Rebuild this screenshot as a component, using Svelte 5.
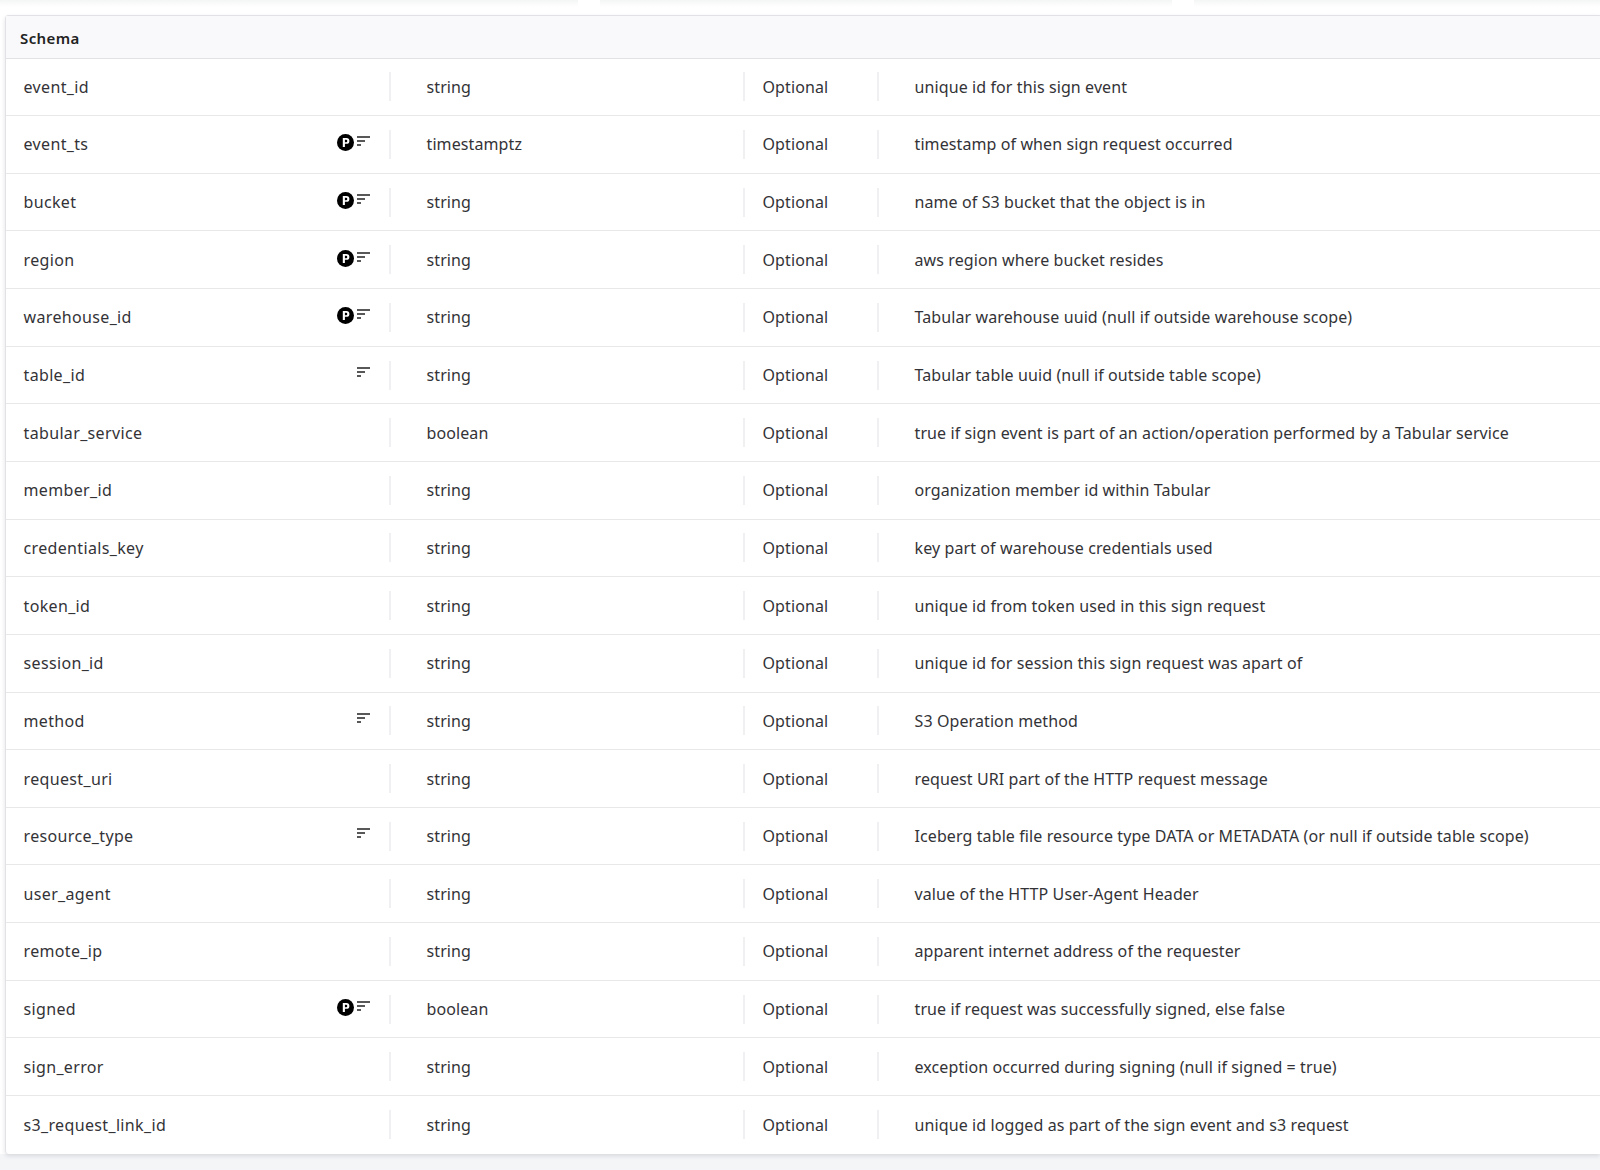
<script>
  const rows = [
    ['event_id', '', 'string', 'unique id for this sign event'],
    ['event_ts', 'ps', 'timestamptz', 'timestamp of when sign request occurred'],
    ['bucket', 'ps', 'string', 'name of S3 bucket that the object is in'],
    ['region', 'ps', 'string', 'aws region where bucket resides'],
    ['warehouse_id', 'ps', 'string', 'Tabular warehouse uuid (null if outside warehouse scope)'],
    ['table_id', 's', 'string', 'Tabular table uuid (null if outside table scope)'],
    ['tabular_service', '', 'boolean', 'true if sign event is part of an action/operation performed by a Tabular service'],
    ['member_id', '', 'string', 'organization member id within Tabular'],
    ['credentials_key', '', 'string', 'key part of warehouse credentials used'],
    ['token_id', '', 'string', 'unique id from token used in this sign request'],
    ['session_id', '', 'string', 'unique id for session this sign request was apart of'],
    ['method', 's', 'string', 'S3 Operation method'],
    ['request_uri', '', 'string', 'request URI part of the HTTP request message'],
    ['resource_type', 's', 'string', 'Iceberg table file resource type DATA or METADATA (or null if outside table scope)'],
    ['user_agent', '', 'string', 'value of the HTTP User-Agent Header'],
    ['remote_ip', '', 'string', 'apparent internet address of the requester'],
    ['signed', 'ps', 'boolean', 'true if request was successfully signed, else false'],
    ['sign_error', '', 'string', 'exception occurred during signing (null if signed = true)'],
    ['s3_request_link_id', '', 'string', 'unique id logged as part of the sign event and s3 request']
  ];
</script>

<div class="page">
  <div class="top-cards">
    <div class="stub first"></div>
    <div class="stub second"></div>
    <div class="stub third"></div>
  </div>
  <div class="main">
    <div class="card">
      <div class="head">Schema</div>
      {#each rows as row}
        <div class="row">
          <div class="cell name">
            <span>{row[0]}</span>
            <div class="icons">
              {#if row[1].includes('p')}
                <svg class="pin" width="17" height="17" viewBox="0 0 17 17">
                  <circle cx="8.5" cy="8.5" r="8.5" fill="#000" />
                  <path fill-rule="evenodd" d="M5.8 13V4h3.6q3 0 3 2.9t-3 2.9H7.9V13zM7.9 5.7v2.5h1.2q1.2 0 1.2-1.25T9.1 5.7z" fill="#fff" />
                </svg>
              {/if}
              {#if row[1].includes('s')}
                <svg class="sort" width="13" height="10" viewBox="0 0 13 10">
                  <path d="M0 1h13M0 5h8M0 9h4" stroke="#222" stroke-width="1.3" fill="none" />
                </svg>
              {/if}
            </div>
          </div>
          <div class="cell type">{row[2]}</div>
          <div class="cell req">Optional</div>
          <div class="cell desc">{row[3]}</div>
        </div>
      {/each}
    </div>
  </div>
  <div class="foot"></div>
</div>

<style>
  :global(body) {
    overflow: hidden;
  }

  .page {
    height: 1170px;
    display: flex;
    flex-direction: column;
    background: #fff;
    font-family: 'Noto Sans', sans-serif;
    color: #333337;
  }

  .top-cards {
    height: 15px;
    flex: none;
    display: flex;
    gap: 22px;
  }

  .stub {
    height: 7px;
    background: linear-gradient(#f4f6f5, #fff);
  }

  .first {
    width: 578px;
  }

  .second {
    width: 572px;
  }

  .third {
    flex: 1;
  }

  .main {
    flex: none;
    padding-left: 5px;
    position: relative;
    z-index: 1;
  }

  .card {
    background: #fff;
    border-left: 1px solid #e2e2e6;
    border-top: 1px solid #e2e2e6;
    border-radius: 4px 0 0 4px;
    box-shadow: 0 2px 4px rgba(40, 50, 70, 0.14);
  }

  .head {
    height: 42.5px;
    box-sizing: border-box;
    padding: 2px 0 0 14px;
    display: flex;
    align-items: center;
    background: #f9f9fb;
    border-bottom: 1px solid #e2e2e6;
    font-size: 15px;
    font-weight: 600;
    letter-spacing: 0.4px;
    color: #222;
  }

  .row {
    height: 57.65px;
    box-sizing: border-box;
    display: grid;
    grid-template-columns: 383px 354px 134px 1fr;
    align-items: center;
    border-bottom: 1px solid #e8e8ea;
    font-size: 16px;
    letter-spacing: 0.1px;
  }

  .row:last-child {
    border-bottom: 0;
  }

  .cell {
    height: 29px;
    display: flex;
    align-items: center;
    box-sizing: border-box;
    white-space: nowrap;
    border-left: 2px solid #f0f0f2;
  }

  .name {
    border-left: 0;
    padding-left: 17.5px;
    justify-content: space-between;
    letter-spacing: 0.35px;
  }

  .type {
    padding-left: 35.5px;
  }

  .req {
    padding-left: 17.5px;
  }

  .desc {
    padding-left: 35.5px;
  }

  .icons {
    height: 17px;
    display: flex;
    align-items: flex-start;
    gap: 3px;
    padding-right: 19px;
    margin-top: -3px;
  }

  .sort {
    margin-top: 2px;
  }

  .foot {
    flex: 1;
    background: #f4f5f7;
  }
</style>
